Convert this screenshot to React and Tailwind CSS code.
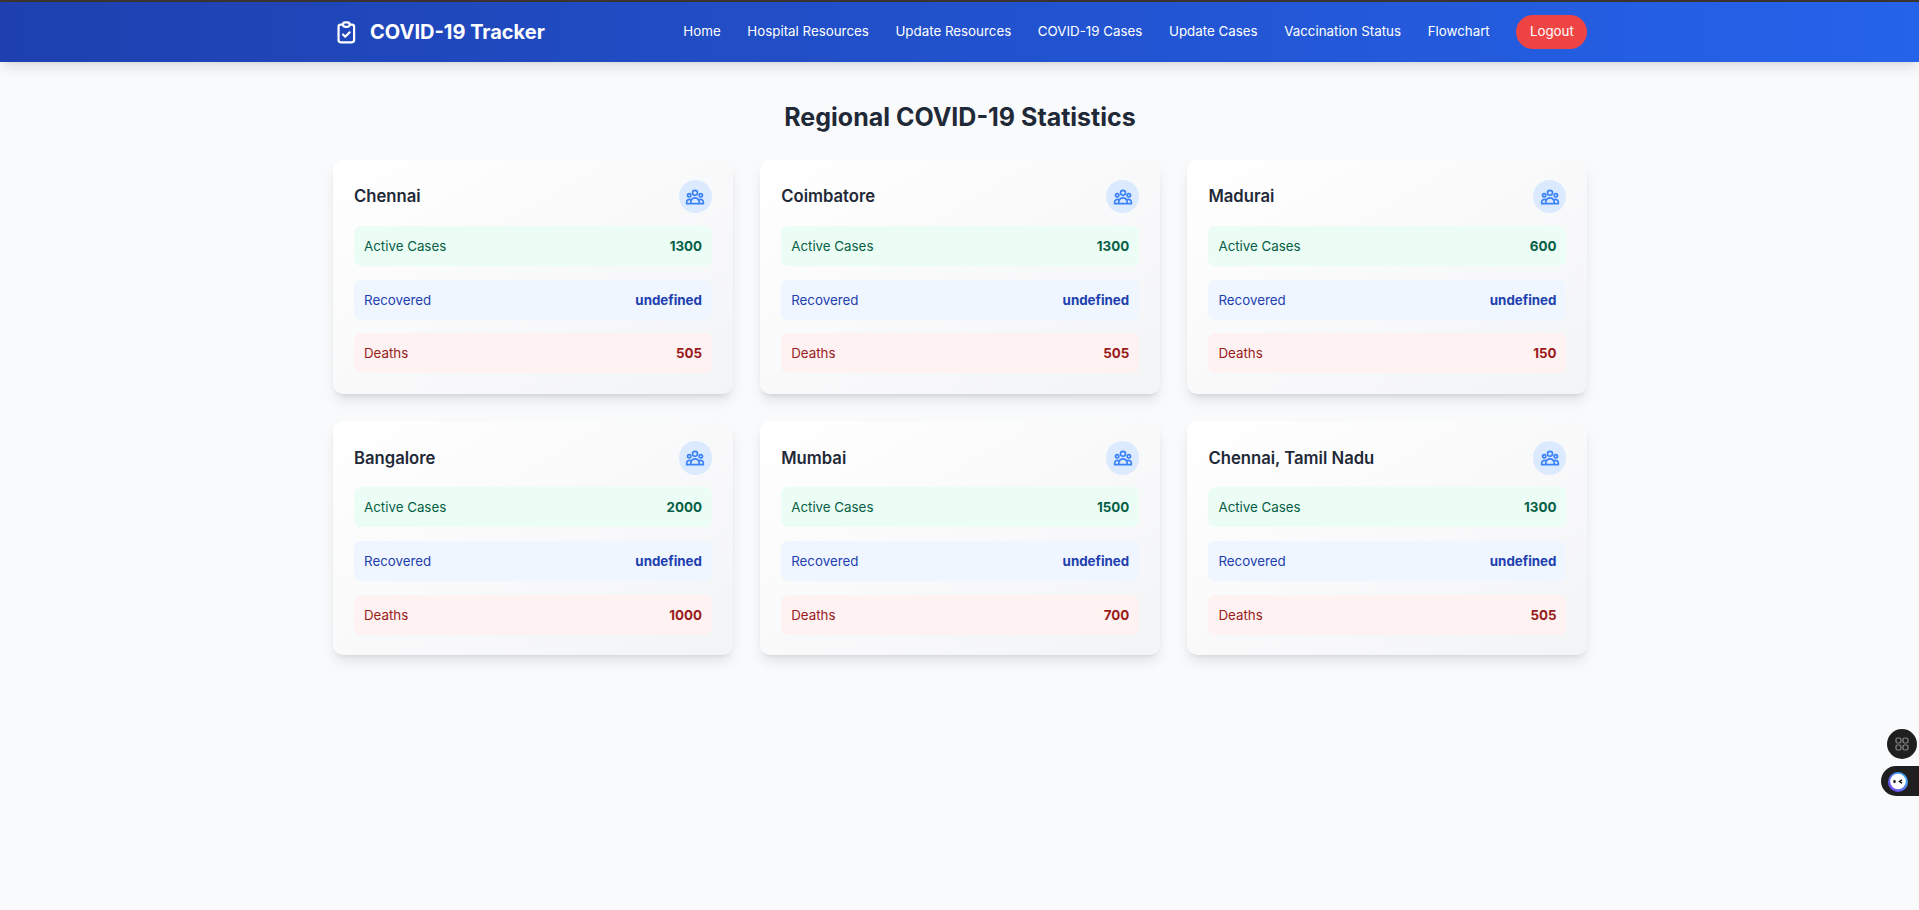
import React from 'react';

const navLinks = ['Home', 'Hospital Resources', 'Update Resources', 'COVID-19 Cases', 'Update Cases', 'Vaccination Status', 'Flowchart'];

const regions = [
  { name: 'Chennai', active: 1300, deaths: 505 },
  { name: 'Coimbatore', active: 1300, deaths: 505 },
  { name: 'Madurai', active: 600, deaths: 150 },
  { name: 'Bangalore', active: 2000, deaths: 1000 },
  { name: 'Mumbai', active: 1500, deaths: 700 },
  { name: 'Chennai, Tamil Nadu', active: 1300, deaths: 505 },
];

const ClipboardIcon = () => (
  <svg className="w-[26.67px] h-[26.67px] text-white" fill="none" viewBox="0 0 24 24" stroke="currentColor" strokeWidth="2" strokeLinecap="round" strokeLinejoin="round">
    <path d="M9 5H7a2 2 0 00-2 2v12a2 2 0 002 2h10a2 2 0 002-2V7a2 2 0 00-2-2h-2M9 5a2 2 0 002 2h2a2 2 0 002-2M9 5a2 2 0 012-2h2a2 2 0 012 2m-6 9l2 2 4-4" />
  </svg>
);

const GroupIcon = () => (
  <svg className="w-[20px] h-[20px] text-[#3b82f6]" fill="none" viewBox="0 0 24 24" stroke="currentColor" strokeWidth="2" strokeLinecap="round" strokeLinejoin="round">
    <path d="M17 20h5v-2a3 3 0 00-5.356-1.857M17 20H7m10 0v-2c0-.656-.126-1.283-.356-1.857M7 20H2v-2a3 3 0 015.356-1.857M7 20v-2c0-.656.126-1.283.356-1.857m0 0a5.002 5.002 0 019.288 0M15 7a3 3 0 11-6 0 3 3 0 016 0zm6 3a2 2 0 11-4 0 2 2 0 014 0zM7 10a2 2 0 11-4 0 2 2 0 014 0z" />
  </svg>
);

const StatRow = ({ label, value, rowClass }) => (
  <div className={`flex justify-between items-center p-[10px] rounded-[7px] text-[13.33px] leading-[20px] ${rowClass}`}>
    <span>{label}</span>
    <span className="font-bold">{value}</span>
  </div>
);

const RegionCard = ({ region }) => (
  <div className="rounded-[10.5px] pl-[21px] pr-[20.6px] pt-[20px] pb-[20.6px] bg-gradient-to-br from-white to-[#f3f4f6] shadow-[0_8.3px_12.5px_-2.5px_rgba(0,0,0,0.1),0_3.3px_5px_-3.3px_rgba(0,0,0,0.1)]">
    <div className="flex justify-between items-center mb-[12.67px]">
      <h3 className="text-[16.67px] font-semibold text-[#1f2937]">{region.name}</h3>
      <div className="w-[33.33px] h-[33.33px] rounded-full bg-[#dbeafe] flex items-center justify-center">
        <GroupIcon />
      </div>
    </div>
    <div className="flex flex-col gap-[13.6px]">
      <StatRow label="Active Cases" value={region.active} rowClass="bg-[#ecfdf5] text-[#065f46]" />
      <StatRow label="Recovered" value="undefined" rowClass="bg-[#eff6ff] text-[#1e40af]" />
      <StatRow label="Deaths" value={region.deaths} rowClass="bg-[#fef2f2] text-[#991b1b]" />
    </div>
  </div>
);

export default function App() {
  return (
    <div className="min-h-screen bg-[#f9fafb] font-['Inter',sans-serif]">
      <div className="h-[2px] bg-[#3b3330]" />
      <header className="h-[60px] bg-gradient-to-r from-[#1e40af] to-[#2563eb] shadow-[0_8.3px_12.5px_-2.5px_rgba(0,0,0,0.1),0_3.3px_5px_-3.3px_rgba(0,0,0,0.1)]">
        <div className="w-[1254px] h-full ml-[333.4px] flex items-center justify-between">
          <div className="flex items-center gap-[10px]">
            <ClipboardIcon />
            <span className="text-[20px] font-bold text-white">COVID-19 Tracker</span>
          </div>
          <nav className="flex items-center gap-[26.67px] text-[13.33px] text-white">
            {navLinks.map(link => (
              <a key={link} href="#">{link}</a>
            ))}
            <button className="w-[71px] h-[33.33px] rounded-full bg-[#ef4444] text-white">Logout</button>
          </nav>
        </div>
      </header>

      <main className="w-[1254px] ml-[333px] pt-[40px]">
        <h2 className="text-[25px] leading-[30px] font-bold text-[#1f2937] text-center mb-[28px]">Regional COVID-19 Statistics</h2>
        <div className="grid grid-cols-3 gap-x-[27.67px] gap-y-[27.7px]">
          {regions.map(region => (
            <RegionCard key={region.name} region={region} />
          ))}
        </div>
      </main>

      {/* floating widgets */}
      <div className="fixed right-[2px] top-[729px] w-[30px] h-[30px] rounded-full bg-[#1f1f1f] flex items-center justify-center">
        <svg className="w-[14px] h-[14px] text-[#8a8a8a]" fill="none" viewBox="0 0 14 14" stroke="currentColor" strokeWidth="1.2">
          <rect x="1" y="1" width="5" height="5" rx="1.5" />
          <rect x="8" y="1" width="5" height="5" rx="1.5" />
          <rect x="1" y="8" width="5" height="5" rx="1.5" />
          <rect x="8" y="8" width="5" height="5" rx="1.5" />
        </svg>
      </div>
      <div className="fixed right-0 top-[766px] w-[38px] h-[29.5px] rounded-l-full bg-[#1f1f1f] flex items-center pl-[7px]">
        <svg className="w-[20px] h-[20px] mt-[2px]" viewBox="0 0 20 20">
          <defs>
            <linearGradient id="botRing" x1="0" y1="1" x2="1" y2="0">
              <stop offset="0" stopColor="#7c3aed" />
              <stop offset="1" stopColor="#38bdf8" />
            </linearGradient>
          </defs>
          <circle cx="10" cy="10" r="10" fill="url(#botRing)" />
          <circle cx="10" cy="9.5" r="7.8" fill="#ffffff" />
          <ellipse cx="6.5" cy="9.5" rx="1.2" ry="1.7" fill="#111111" />
          <path d="M14 7.8L11.5 9.5L14 11.2" fill="none" stroke="#111111" strokeWidth="1.5" />
        </svg>
      </div>
    </div>
  );
}
